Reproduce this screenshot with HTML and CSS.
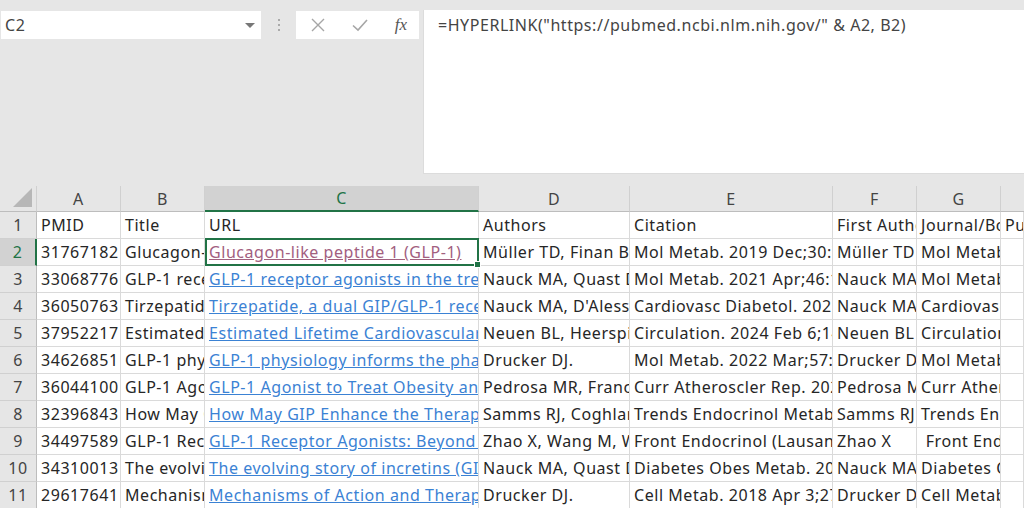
FILE: index.html
```html
<!DOCTYPE html>
<html lang="en">
<head>
<meta charset="UTF-8">
<title>PubMed list</title>
<link rel="stylesheet" href="styles.css">
</head>
<body>
<div class="toolbar">
    <div class="namebox">
        <span>C2</span>
        <span class="arrow"></span>
    </div>
    <div class="dots"><i></i><i></i><i></i></div>
    <div class="buttons">
        <svg class="btn" width="16" height="16" viewBox="0 0 16 16"><path d="M2 2L14 14M14 2L2 14" stroke="#a6a6a6" stroke-width="1.4" fill="none"/></svg>
        <svg class="btn" width="18" height="16" viewBox="0 0 18 16"><path d="M2 8.5L7 13L16 3" stroke="#a6a6a6" stroke-width="1.6" fill="none"/></svg>
        <span class="fx">fx</span>
    </div>
    <div class="formula">=HYPERLINK("https://pubmed.ncbi.nlm.nih.gov/" &amp; A2, B2)</div>
</div>

<div class="sheet">
    <div class="hd corner"></div>
    <div class="hd">A</div>
    <div class="hd">B</div>
    <div class="hd sel-col">C</div>
    <div class="hd">D</div>
    <div class="hd">E</div>
    <div class="hd">F</div>
    <div class="hd">G</div>
    <div class="hd last"></div>

    <div class="rh">1</div>
    <div class="c">PMID</div><div class="c">Title</div><div class="c">URL</div><div class="c">Authors</div><div class="c">Citation</div><div class="c">First Author</div><div class="c">Journal/Book</div><div class="c">Publication</div>

    <div class="rh sel-row">2</div>
    <div class="c">31767182</div><div class="c">Glucagon-like</div><div class="c active"><a class="link visited">Glucagon-like peptide 1 (GLP-1)</a></div><div class="c">Müller TD, Finan B</div><div class="c">Mol Metab. 2019 Dec;30:72</div><div class="c">Müller TD</div><div class="c">Mol Metab</div><div class="c"></div>

    <div class="rh">3</div>
    <div class="c">33068776</div><div class="c">GLP-1 recep</div><div class="c"><a class="link">GLP-1 receptor agonists in the treatment</a></div><div class="c">Nauck MA, Quast DR</div><div class="c">Mol Metab. 2021 Apr;46:101</div><div class="c">Nauck MA</div><div class="c">Mol Metab</div><div class="c"></div>

    <div class="rh">4</div>
    <div class="c">36050763</div><div class="c">Tirzepatide,</div><div class="c"><a class="link">Tirzepatide, a dual GIP/GLP-1 receptor</a></div><div class="c">Nauck MA, D'Alessio</div><div class="c">Cardiovasc Diabetol. 2022 Sep</div><div class="c">Nauck MA</div><div class="c">Cardiovasc</div><div class="c"></div>

    <div class="rh">5</div>
    <div class="c">37952217</div><div class="c">Estimated Life</div><div class="c"><a class="link">Estimated Lifetime Cardiovascular, Kidney</a></div><div class="c">Neuen BL, Heerspink</div><div class="c">Circulation. 2024 Feb 6;149</div><div class="c">Neuen BL</div><div class="c">Circulation</div><div class="c"></div>

    <div class="rh">6</div>
    <div class="c">34626851</div><div class="c">GLP-1 physio</div><div class="c"><a class="link">GLP-1 physiology informs the pharmaco</a></div><div class="c">Drucker DJ.</div><div class="c">Mol Metab. 2022 Mar;57:101</div><div class="c">Drucker DJ</div><div class="c">Mol Metab</div><div class="c"></div>

    <div class="rh">7</div>
    <div class="c">36044100</div><div class="c">GLP-1 Agonist</div><div class="c"><a class="link">GLP-1 Agonist to Treat Obesity and Prevent</a></div><div class="c">Pedrosa MR, Franco</div><div class="c">Curr Atheroscler Rep. 2022</div><div class="c">Pedrosa MR</div><div class="c">Curr Athero</div><div class="c"></div>

    <div class="rh">8</div>
    <div class="c">32396843</div><div class="c">How May GIP</div><div class="c"><a class="link">How May GIP Enhance the Therapeutic</a></div><div class="c">Samms RJ, Coghlan</div><div class="c">Trends Endocrinol Metab. 20</div><div class="c">Samms RJ</div><div class="c">Trends Endo</div><div class="c"></div>

    <div class="rh">9</div>
    <div class="c">34497589</div><div class="c">GLP-1 Recep</div><div class="c"><a class="link">GLP-1 Receptor Agonists: Beyond Their</a></div><div class="c">Zhao X, Wang M, Wen</div><div class="c">Front Endocrinol (Lausanne)</div><div class="c">Zhao X</div><div class="c">&nbsp;Front Endo</div><div class="c"></div>

    <div class="rh">10</div>
    <div class="c">34310013</div><div class="c">The evolving</div><div class="c"><a class="link">The evolving story of incretins (GIP and</a></div><div class="c">Nauck MA, Quast DR</div><div class="c">Diabetes Obes Metab. 2021</div><div class="c">Nauck MA</div><div class="c">Diabetes Ob</div><div class="c"></div>

    <div class="rh">11</div>
    <div class="c">29617641</div><div class="c">Mechanisms</div><div class="c"><a class="link">Mechanisms of Action and Therapeutic</a></div><div class="c">Drucker DJ.</div><div class="c">Cell Metab. 2018 Apr 3;27</div><div class="c">Drucker DJ</div><div class="c">Cell Metab</div><div class="c"></div>
</div>
</body>
</html>
```

FILE: styles.css
```css
* {
    box-sizing: border-box;
}

body {
    margin: 0;
    font-family: "Noto Sans", "Liberation Sans", sans-serif;
    font-size: 16px;
    letter-spacing: 0.55px;
    color: #262626;
    background-color: #e6e6e6;
    overflow: hidden;
}

/* formula bar area */
.toolbar {
    display: flex;
    align-items: flex-start;
    height: 186px;
    background-color: #e6e6e6;
}

.namebox {
    display: flex;
    align-items: center;
    justify-content: space-between;
    width: 260px;
    height: 28px;
    margin: 11px 0 0 1px;
    padding: 0 6px 0 4px;
    background-color: #fff;
    color: #444;
}

.arrow {
    width: 0;
    height: 0;
    border-left: 5px solid transparent;
    border-right: 5px solid transparent;
    border-top: 5px solid #777;
}

.dots {
    display: flex;
    flex-direction: column;
    align-items: center;
    gap: 3px;
    width: 35px;
    margin-top: 19px;
}

.dots i {
    width: 2px;
    height: 2px;
    background-color: #aaa;
}

.buttons {
    display: flex;
    align-items: center;
    justify-content: space-between;
    width: 123px;
    height: 28px;
    margin-top: 11px;
    padding: 0 12px 0 14px;
    background-color: #fff;
}

.fx {
    font-family: "Liberation Serif", serif;
    font-style: italic;
    font-size: 17px;
    letter-spacing: 0;
    color: #555;
}

.formula {
    flex: 1;
    height: 164px;
    margin: 10px 0 0 4px;
    padding: 4px 0 0 14px;
    background-color: #fff;
    color: #444;
    border-left: 1px solid #dcdcdc;
    border-bottom: 1px solid #dcdcdc;
    white-space: nowrap;
}

/* grid */
.sheet {
    display: grid;
    grid-template-columns: 37px 84px 84px 274px 151px 203px 84px 84px 1fr;
    grid-template-rows: 26px;
    grid-auto-rows: 27px;
    background-color: #fff;
}

.hd {
    display: flex;
    align-items: center;
    justify-content: center;
    background-color: #e6e6e6;
    color: #444;
    border-right: 1px solid #d0d0d0;
    border-bottom: 1px solid #bdbdbd;
}

.hd.last {
    border-right: none;
}

.corner {
    position: relative;
}

.corner::after {
    content: "";
    position: absolute;
    right: 4px;
    bottom: 4px;
    width: 19px;
    height: 19px;
    background-color: #b7b7b7;
    clip-path: polygon(100% 0, 100% 100%, 0 100%);
}

.sel-col {
    background-color: #d2d2d2;
    color: #217346;
    border-bottom: 2px solid #217346;
}

.rh {
    display: flex;
    align-items: center;
    justify-content: center;
    background-color: #e6e6e6;
    color: #444;
    border-right: 1px solid #bdbdbd;
    border-bottom: 1px solid #d0d0d0;
}

.sel-row {
    background-color: #d2d2d2;
    color: #217346;
    border-right: 2px solid #217346;
}

.c {
    display: flex;
    align-items: center;
    padding-left: 4px;
    white-space: nowrap;
    overflow: hidden;
    border-right: 1px solid #dadada;
    border-bottom: 1px solid #dadada;
}

.link {
    color: #3b82d4;
    text-decoration: underline;
}

.link.visited {
    color: #a2607f;
}

.active {
    position: relative;
    overflow: visible;
}

.active::before {
    content: "";
    position: absolute;
    left: 0;
    top: -1px;
    right: -1px;
    bottom: -1px;
    border: 2px solid #217346;
}

.active::after {
    content: "";
    position: absolute;
    right: -3px;
    bottom: -3px;
    width: 5px;
    height: 5px;
    background-color: #217346;
    border: 1px solid #fff;
}
```
